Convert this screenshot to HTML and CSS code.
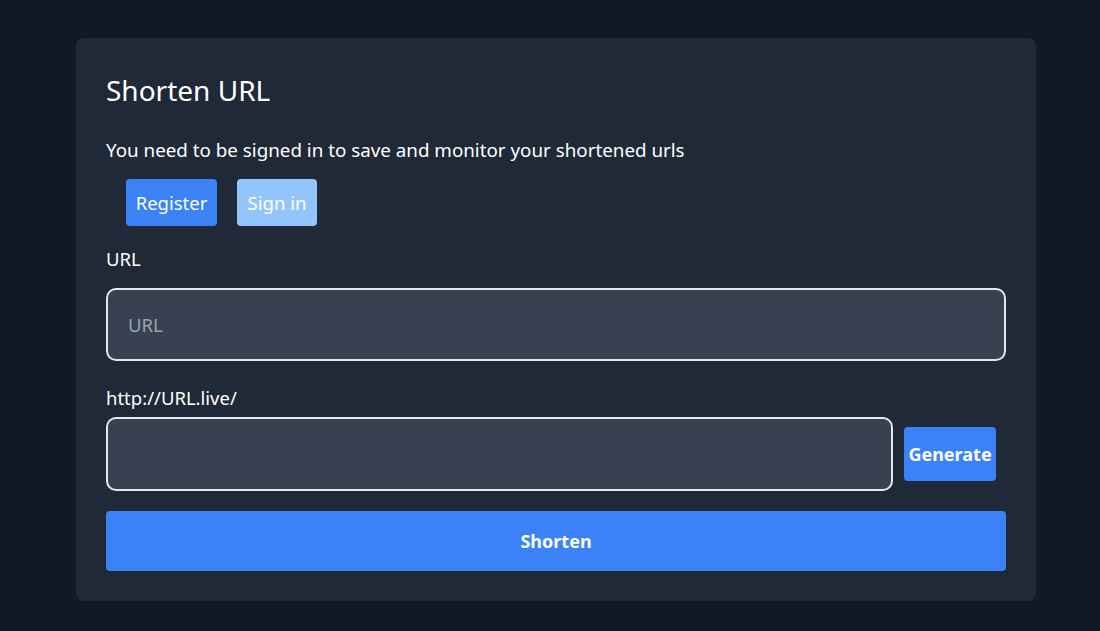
FILE: index.html
```html
<!DOCTYPE html>
<html>
<head>
<meta charset="utf-8">
<link rel="stylesheet" href="styles.css">
</head>
<body>
<main class="page">
  <section class="card">
    <h1 class="title">Shorten URL</h1>
    <p class="note">You need to be signed in to save and monitor your shortened urls</p>
    <div class="auth">
      <button class="btn btn-primary">Register</button>
      <button class="btn btn-light">Sign in</button>
    </div>
    <label class="label">URL</label>
    <input class="field" type="text" placeholder="URL">
    <label class="label label-2">http://URL.live/</label>
    <div class="row">
      <input class="field field-short" type="text">
      <button class="btn-generate">Generate</button>
    </div>
    <button class="btn-shorten">Shorten</button>
  </section>
</main>
</body>
</html>
```
FILE: styles.css
```css
* { box-sizing: border-box; }
html, body { margin: 0; padding: 0; }
body {
  background: #111827;
  font-family: "Noto Sans", "Open Sans", sans-serif;
  color: #ffffff;
  width: 1100px;
  height: 631px;
}
.page {
  padding: 38px 64px 0 76px;
}
.card {
  width: 960px;
  height: 563px;
  background: #1f2937;
  border-radius: 8px;
  padding: 34px 30px 30px 30px;
  display: flex;
  flex-direction: column;
}
.title {
  margin: 0;
  font-size: 28px;
  font-weight: 400;
  line-height: 36px;
}
.note {
  margin: 29px 0 0 0;
  font-size: 18.8px;
  line-height: 26px;
}
.auth {
  display: flex;
  gap: 20px;
  margin: 16px 0 0 20px;
}
.btn {
  border: none;
  border-radius: 4px;
  color: #fff;
  font-family: inherit;
  font-size: 18.5px;
  height: 47px;
  padding: 0;
}
.btn-primary { background: #3b82f6; width: 91px; }
.btn-light { background: #93c5fd; width: 80px; }
.label {
  margin-top: 20px;
  font-size: 18.5px;
  line-height: 26px;
}
.label-2 { margin-top: 24px; }
.field {
  margin-top: 16px;
  width: 900px;
  height: 73px;
  background: #374151;
  border: 2px solid #e5e7eb;
  border-radius: 10px;
  padding: 0 20px;
  font-family: inherit;
  font-size: 18.5px;
  color: #fff;
  outline: none;
}
.field::placeholder { color: #9ca3af; }
.row {
  display: flex;
  align-items: center;
  gap: 11px;
  margin-top: 6px;
}
.field-short {
  width: 787px;
  height: 74px;
  margin-top: 0;
}
.btn-generate {
  border: none;
  border-radius: 4px;
  background: #3b82f6;
  color: #fff;
  font-family: inherit;
  font-weight: 700;
  font-size: 18px;
  height: 54px;
  width: 92px;
  padding: 0;
}
.btn-shorten {
  margin-top: 20px;
  width: 900px;
  height: 60px;
  border: none;
  border-radius: 4px;
  background: #3b82f6;
  color: #fff;
  font-family: inherit;
  font-weight: 700;
  font-size: 18px;
}
```
